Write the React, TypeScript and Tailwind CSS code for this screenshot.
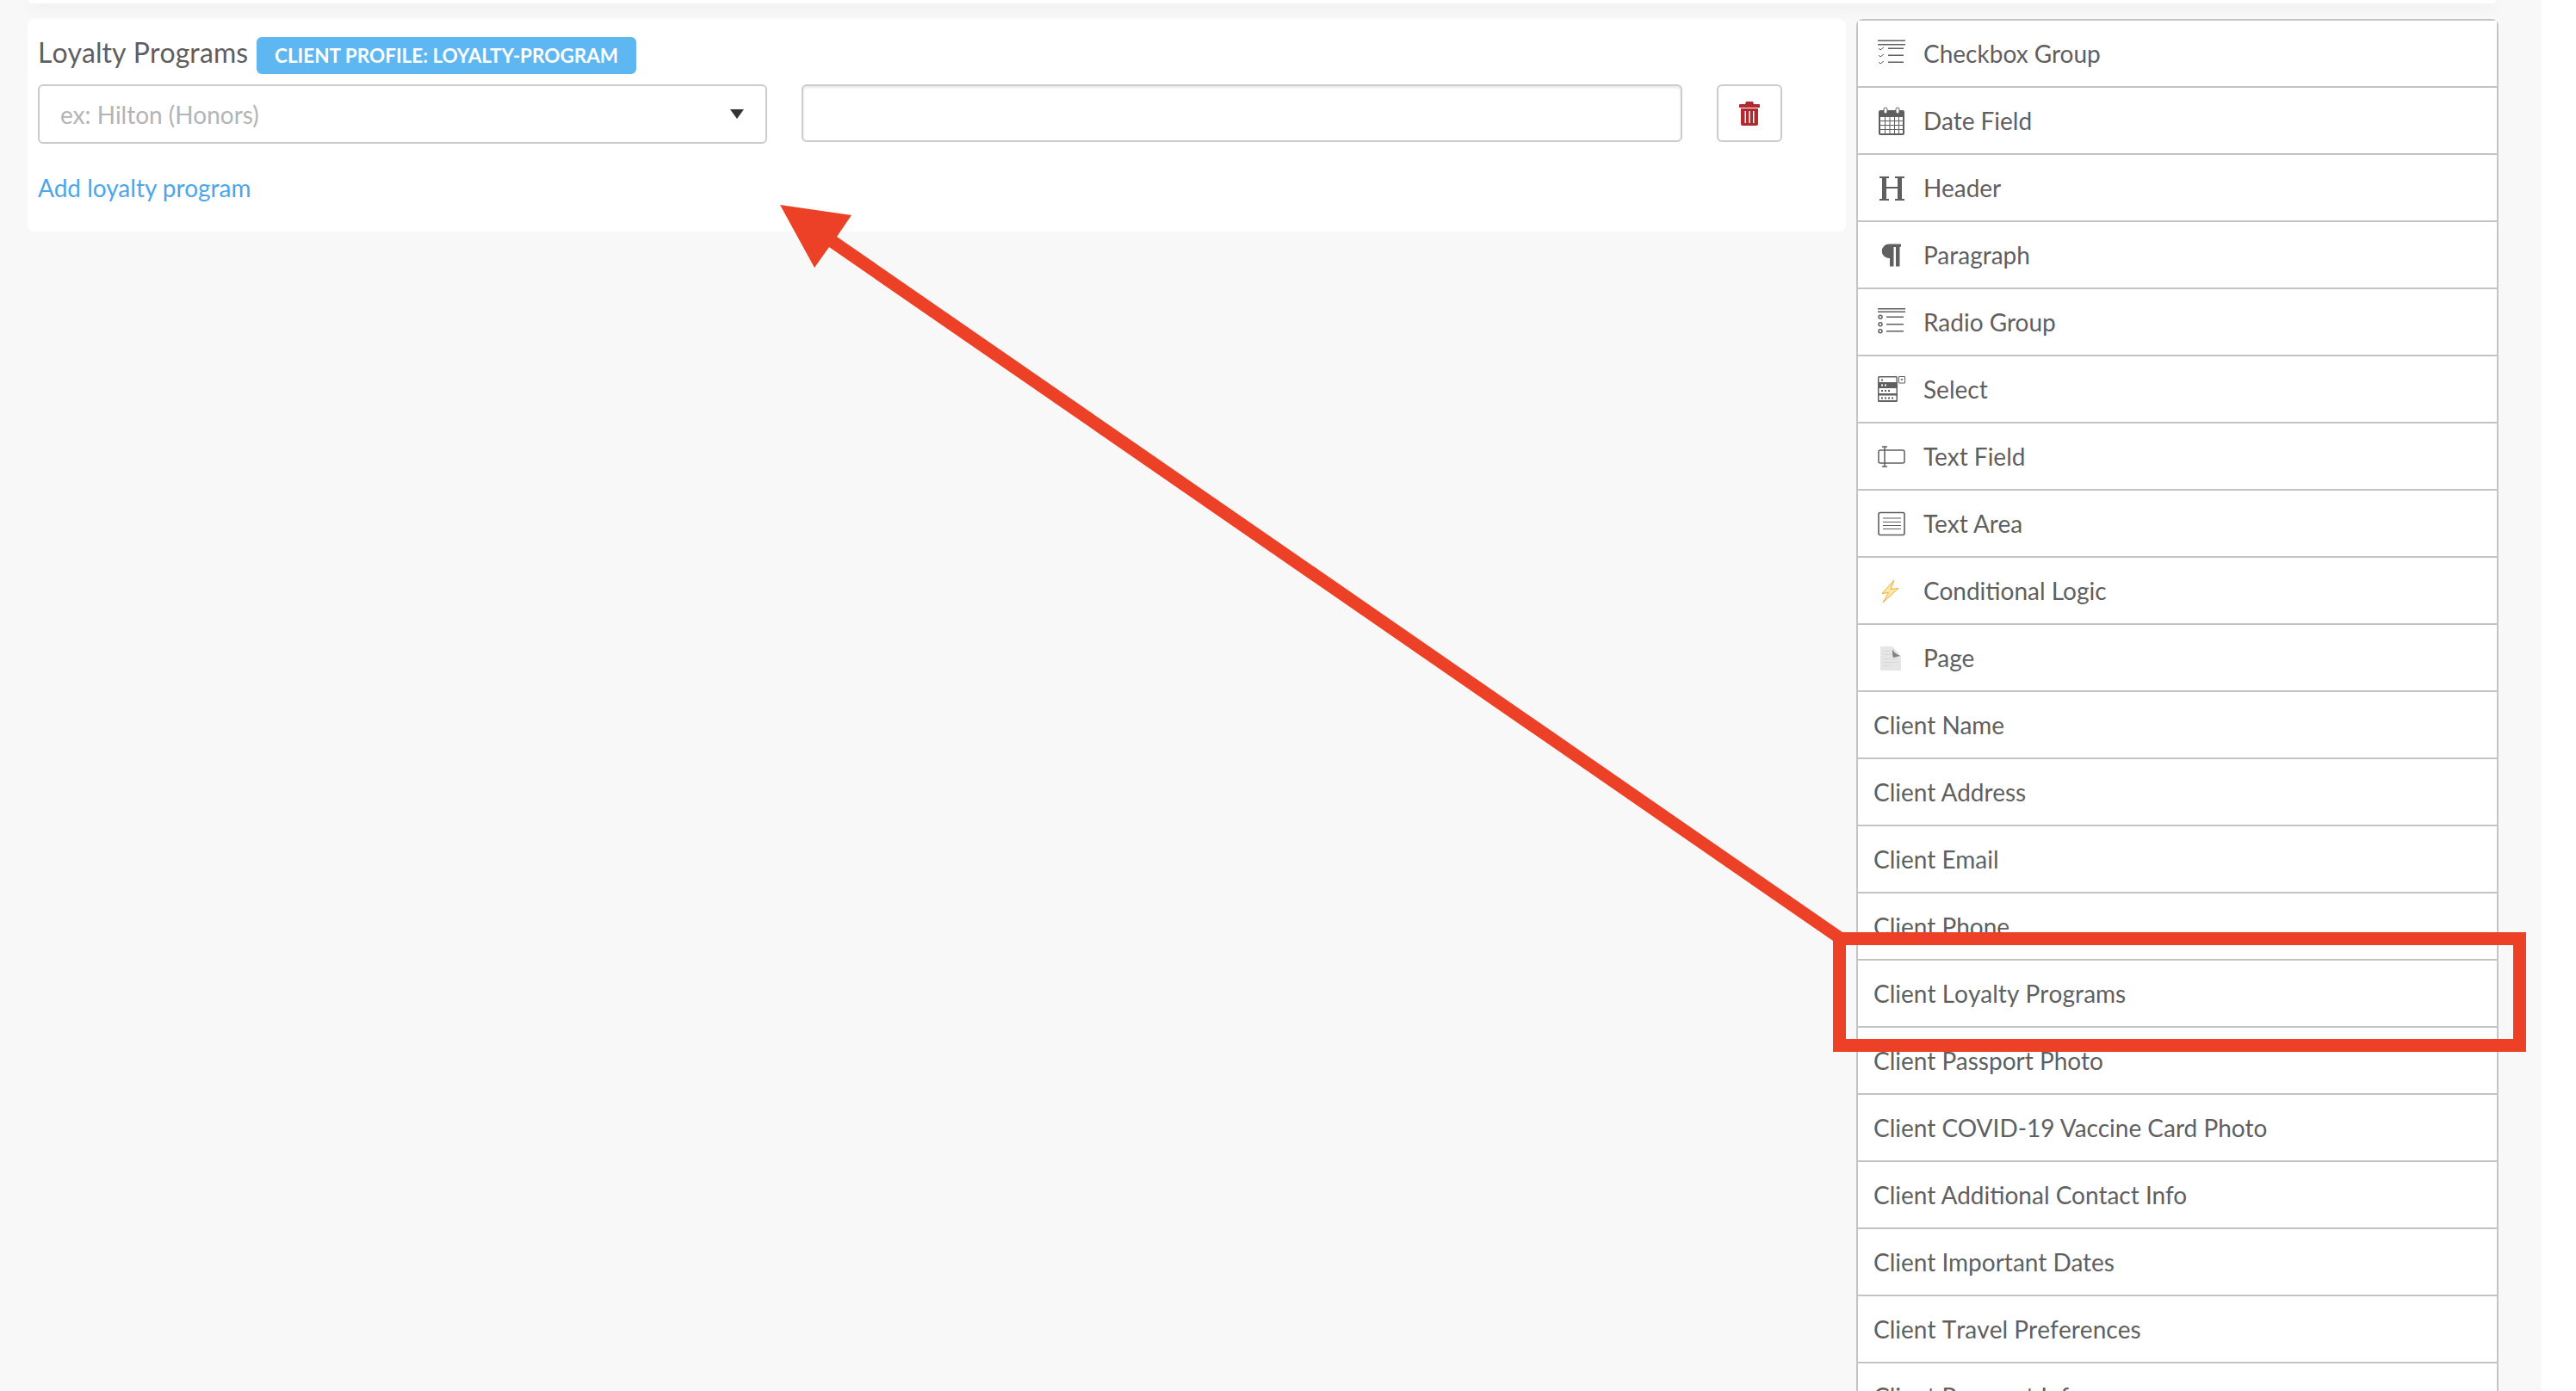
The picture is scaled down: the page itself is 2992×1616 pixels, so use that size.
const iconRows = [
  { label: "Checkbox Group", icon: <CheckboxIcon /> },
  { label: "Date Field", icon: <CalendarIcon /> },
  { label: "Header", icon: <HeaderIcon /> },
  { label: "Paragraph", icon: <ParagraphIcon /> },
  { label: "Radio Group", icon: <RadioIcon /> },
  { label: "Select", icon: <SelectIcon /> },
  { label: "Text Field", icon: <TextFieldIcon /> },
  { label: "Text Area", icon: <TextAreaIcon /> },
  { label: "Conditional Logic", icon: <BoltIcon /> },
  { label: "Page", icon: <PageIcon /> },
];

const clientRows = [
  "Client Name",
  "Client Address",
  "Client Email",
  "Client Phone",
  "Client Loyalty Programs",
  "Client Passport Photo",
  "Client COVID-19 Vaccine Card Photo",
  "Client Additional Contact Info",
  "Client Important Dates",
  "Client Travel Preferences",
  "Client Payment Info",
];

// these two sit wider in the picture, as if set without kerning
const unkerned = ["Client Loyalty Programs", "Client Travel Preferences"];

function CheckboxIcon() {
  return (
    <svg viewBox="0 0 32 32" className="size-8" fill="#5f5f5f">
      <rect x="0" y="0.5" width="32" height="1.5" />
      <rect x="0" y="5" width="32" height="1.5" />
      <rect x="12" y="9.5" width="18" height="1.5" />
      <rect x="12" y="17.5" width="18" height="1.5" />
      <rect x="12" y="25.5" width="18" height="1.5" />
      <path d="M1 10l2 2 4-3M1 18l2 2 4-3M1 26l2 2 4-3" fill="none" stroke="#5f5f5f" strokeWidth="1" />
    </svg>
  );
}

function CalendarIcon() {
  return (
    <svg viewBox="0 0 32 33" className="h-[33px] w-8" fill="#5f5f5f">
      <path d="M3 4h26a2 2 0 0 1 2 2v25a2 2 0 0 1-2 2H3a2 2 0 0 1-2-2V6a2 2 0 0 1 2-2z" />
      <path d="M3 12h26v19H3z" fill="#fff" />
      <path d="M3 16h26v1H3zM3 21h26v1H3zM3 26h26v1H3zM8 12h1v19H8zM13.500 12h1v19h-1zM19 12h1v19h-1zM24 12h1v19h-1z" />
      <rect x="7" y="1" width="4" height="7" rx="2" fill="#fff" stroke="#5f5f5f" strokeWidth="1" />
      <rect x="21" y="1" width="4" height="7" rx="2" fill="#fff" stroke="#5f5f5f" strokeWidth="1" />
    </svg>
  );
}

function HeaderIcon() {
  return (
    <svg viewBox="0 0 32 32" className="size-8" fill="#5f5f5f">
      <path d="M2 3h11v2h-3v10h13V5h-3V3h11v2h-3v24h3v2H20v-2h3V17H10v12h3v2H2v-2h3V5H2z" />
    </svg>
  );
}

function ParagraphIcon() {
  return (
    <svg viewBox="0 0 32 32" className="size-8" fill="#5f5f5f">
      <path d="M13 3.500h14v3l-1.500.5v22.500H21V7h-2.500v22.500H14V20h-1a8.250 8.250 0 0 1 0-16.500z" />
    </svg>
  );
}

function RadioIcon() {
  return (
    <svg viewBox="0 0 32 32" className="size-8" fill="#5f5f5f">
      <rect x="0" y="0" width="32" height="1.5" />
      <rect x="0" y="3.500" width="32" height="1.5" />
      <rect x="10" y="9.500" width="20" height="1.5" />
      <rect x="10" y="18" width="20" height="1.5" />
      <rect x="10" y="26" width="20" height="1.5" />
      <g fill="none" stroke="#5f5f5f" strokeWidth="1.5">
        <circle cx="3" cy="10.250" r="2" />
        <circle cx="3" cy="18.750" r="2" />
        <circle cx="3" cy="26.750" r="2" />
      </g>
    </svg>
  );
}

function SelectIcon() {
  return (
    <svg viewBox="0 0 32 32" className="size-8" fill="#5f5f5f">
      <rect x="0" y="1" width="23" height="30" rx="1.500" />
      <path d="M1.500 2.500h20V8h-20zM1.500 15h20v6h-20zM1.500 23.500h20V29h-20z" fill="#fff" />
      <path d="M24.500 1.500h7V9h-7z" fill="#fff" stroke="#5f5f5f" strokeWidth="1" />
      <path d="M26.500 4h3L28 6.500z" />
      <path d="M4 4.500h2v2H4zM4 17h2v2H4zM8 17h2v2H8zM12 17h2v2h-2zM4 25.500h2v2H4zM8 25.500h2v2H8zM12 25.500h2v2h-2zM16 25.500h2v2h-2z" />
      <path d="M4 10.500h2v2H4zM8 10.500h2v2H8z" fill="#fff" />
    </svg>
  );
}

function TextFieldIcon() {
  return (
    <svg viewBox="0 0 32 32" className="size-8" fill="none" stroke="#5f5f5f" strokeWidth="1.5">
      <rect x="1" y="9" width="30" height="15" rx="2" />
      <path d="M8 5v23M5 5h6M5 28h6" />
    </svg>
  );
}

function TextAreaIcon() {
  return (
    <svg viewBox="0 0 32 32" className="size-8" fill="none" stroke="#5f5f5f">
      <rect x="1" y="3.500" width="30" height="26" rx="2" strokeWidth="1.6" />
      <path d="M6 10h21M6 14.500h21M6 18.500h21M6 22.500h21" strokeWidth="1.2" />
    </svg>
  );
}

function BoltIcon() {
  return (
    <svg viewBox="0 0 32 32" className="size-8" fill="#ffe9a8" stroke="#f5a93c" strokeWidth="1">
      <path d="M19 4 5 19.500l7.500-1L6 30l18-16.500-9 1z" />
    </svg>
  );
}

function PageIcon() {
  return (
    <svg viewBox="0 0 32 32" className="size-8" fill="#e6e6e6">
      <path d="M3 3h14l10 11v17H3z" />
      <path d="M6 8h9v1H6zM6 12h11v1H6zM6 17h18v1H6zM6 21h18v1H6zM6 25h9v1H6z" fill="#d8d8d8" />
      <path d="M17 6c1 3 4 6 9 8l-8 2c-1-3-1-6-1-10z" fill="#808080" />
    </svg>
  );
}

function Row({ children }: { children: React.ReactNode }) {
  return (
    <div className="flex h-[78px] shrink-0 items-center border-b-2 border-[#c4c4c4] bg-white text-[28px] text-[#5f5f5f]">
      {children}
    </div>
  );
}

export default function App() {
  return (
    <div className="relative h-[1616px] w-[2992px] overflow-hidden bg-white font-['Lato','Open_Sans',sans-serif]">
      <div className="h-full w-[2952px] bg-[#f8f8f8]">
        <div className="mr-[53px] ml-[33px] h-1 rounded-b-lg bg-white shadow-[0_4px_16px_rgba(0,0,0,0.1)]" />

        <div className="mt-[18px] flex items-start gap-3 pl-8">
          <section className="h-[247px] w-[2112px] rounded-lg bg-white px-3 pt-[21px]">
            <div className="flex items-center gap-[10px]">
              <h2 className="pb-2 text-[32px] leading-[35px] font-normal text-[#5f5f5f] [font-kerning:none]">Loyalty Programs</h2>
              <span className="flex h-[43px] w-[441px] items-center justify-center rounded-md bg-[#5fb7f1] text-[22.5px] font-bold text-white">
                CLIENT PROFILE: LOYALTY-PROGRAM
              </span>
            </div>

            <div className="mt-3 flex items-start">
              <div className="flex h-[69px] w-[847px] items-center justify-between rounded-md border-2 border-[#cbcbcb] pr-[25px] pl-6">
                <span className="text-[28px] text-[#b4b4b4]">ex: Hilton (Honors)</span>
                <span className="h-0 w-0 border-x-[8px] border-t-[11px] border-x-transparent border-t-[#333333]" />
              </div>
              <input
                type="text"
                className="ml-10 h-[67px] w-[1023px] rounded-md border-2 border-[#cbcbcb] shadow-[inset_0_2px_3px_rgba(0,0,0,0.1)] outline-none"
              />
              <button className="ml-10 flex h-[67px] w-[76px] items-center justify-center rounded-md border-2 border-[#cbcbcb] bg-white">
                <svg viewBox="0 0 24 28" className="h-7 w-6" fill="#b02a30">
                  <path d="M8 0h8l1 3h6a1 1 0 0 1 1 1v3H0V4a1 1 0 0 1 1-1h6z" />
                  <path d="M2 8h20v18a2 2 0 0 1-2 2H4a2 2 0 0 1-2-2z" />
                  <path d="M6.500 11H8v14H6.500zM11.250 11h1.500v14h-1.500zM16 11h1.500v14H16z" fill="#fff" />
                </svg>
              </button>
            </div>

            <a className="mt-[30px] block text-[28px] leading-[42px] text-[#4ba6ec]">Add loyalty program</a>
          </section>

          <aside className="flex w-[746px] flex-col rounded-t-lg border-x-2 border-t-2 border-[#c4c4c4] bg-white">
            {iconRows.map((row) => (
              <Row key={row.label}>
                <span className="mr-[21px] ml-[23px] flex shrink-0">{row.icon}</span>
                {row.label}
              </Row>
            ))}
            {clientRows.map((label) => (
              <Row key={label}>
                <span className={unkerned.includes(label) ? "pl-[18px] [font-kerning:none]" : "pl-[18px]"}>{label}</span>
              </Row>
            ))}
          </aside>
        </div>
      </div>

      {/* annotation drawn on top of the screenshot */}
      <svg className="pointer-events-none absolute inset-0 h-[1616px] w-[2992px]" viewBox="0 0 2992 1616">
        <polygon points="906,238 989,250 972,275 2140,1083 2129,1093 963,287 946,311" fill="#ec4126" />
      </svg>
      <div className="absolute top-[1083px] left-[2129px] h-[139px] w-[805px] border-[15px] border-[#ec4126]" />
    </div>
  );
}
